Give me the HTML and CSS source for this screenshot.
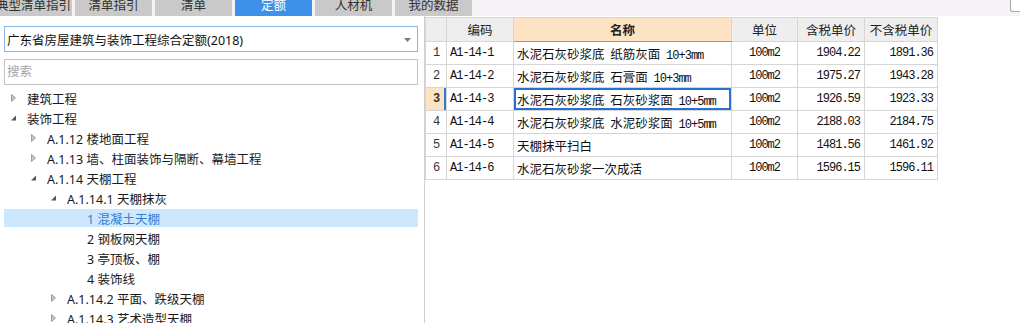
FILE: index.html
```html
<!DOCTYPE html>
<html lang="zh-CN">
<head>
  <meta charset="UTF-8">
  <title>定额</title>
  <link rel="stylesheet" href="styles.css">
</head>
<body>
  <!-- Top tabs -->
  <div class="topbar">
    <div class="tabs">
      <div class="tab">典型清单指引</div>
      <div class="tab">清单指引</div>
      <div class="tab">清单</div>
      <div class="tab active">定额</div>
      <div class="tab">人材机</div>
      <div class="tab">我的数据</div>
    </div>
    <div class="corner-box"></div>
  </div>

  <div class="main">
    <!-- Left: library + tree -->
    <div class="left">
      <div class="select">
        <span>广东省房屋建筑与装饰工程综合定额(2018)</span>
        <svg class="caret" width="7" height="4" viewBox="0 0 7 4"><polygon points="0,0 7,0 3.5,4" fill="#7a7a7a"/></svg>
      </div>
      <div class="search">搜索</div>

      <div class="tree">
        <div class="node lv0"><span class="arrow"><svg width="8" height="8" viewBox="0 0 8 8"><polygon class="closed" points="1.5,0.5 5.5,4 1.5,7.5"/></svg></span>建筑工程</div>
        <div class="node lv0"><span class="arrow"><svg width="8" height="8" viewBox="0 0 8 8"><polygon class="open" points="6,1.5 6,6.5 1,6.5"/></svg></span>装饰工程</div>
        <div class="node lv1"><span class="arrow"><svg width="8" height="8" viewBox="0 0 8 8"><polygon class="closed" points="1.5,0.5 5.5,4 1.5,7.5"/></svg></span>A.1.12 楼地面工程</div>
        <div class="node lv1"><span class="arrow"><svg width="8" height="8" viewBox="0 0 8 8"><polygon class="closed" points="1.5,0.5 5.5,4 1.5,7.5"/></svg></span>A.1.13 墙、柱面装饰与隔断、幕墙工程</div>
        <div class="node lv1"><span class="arrow"><svg width="8" height="8" viewBox="0 0 8 8"><polygon class="open" points="6,1.5 6,6.5 1,6.5"/></svg></span>A.1.14 天棚工程</div>
        <div class="node lv2"><span class="arrow"><svg width="8" height="8" viewBox="0 0 8 8"><polygon class="open" points="6,1.5 6,6.5 1,6.5"/></svg></span>A.1.14.1 天棚抹灰</div>
        <div class="node lv3 selected">1 混凝土天棚</div>
        <div class="node lv3">2 钢板网天棚</div>
        <div class="node lv3">3 亭顶板、棚</div>
        <div class="node lv3">4 装饰线</div>
        <div class="node lv2"><span class="arrow"><svg width="8" height="8" viewBox="0 0 8 8"><polygon class="closed" points="1.5,0.5 5.5,4 1.5,7.5"/></svg></span>A.1.14.2 平面、跌级天棚</div>
        <div class="node lv2"><span class="arrow"><svg width="8" height="8" viewBox="0 0 8 8"><polygon class="closed" points="1.5,0.5 5.5,4 1.5,7.5"/></svg></span>A.1.14.3 艺术造型天棚</div>
      </div>
    </div>

    <!-- Right: quota grid -->
    <div class="right">
      <table class="grid">
        <colgroup>
          <col class="c-no"><col class="c-code"><col class="c-name"><col class="c-unit"><col class="c-price"><col class="c-price2">
        </colgroup>
        <thead>
          <tr>
            <th></th>
            <th>编码</th>
            <th class="hl">名称</th>
            <th>单位</th>
            <th>含税单价</th>
            <th>不含税单价</th>
          </tr>
        </thead>
        <tbody>
          <tr>
            <td class="no">1</td><td class="code">A1-14-1</td>
            <td class="name">水泥石灰砂浆底 纸筋灰面 <span class="mono">10+3mm</span></td>
            <td class="unit">100m2</td><td class="num">1904.22</td><td class="num">1891.36</td>
          </tr>
          <tr>
            <td class="no">2</td><td class="code">A1-14-2</td>
            <td class="name">水泥石灰砂浆底 石膏面 <span class="mono">10+3mm</span></td>
            <td class="unit">100m2</td><td class="num">1975.27</td><td class="num">1943.28</td>
          </tr>
          <tr class="current">
            <td class="no">3</td><td class="code">A1-14-3</td>
            <td class="name focus">水泥石灰砂浆底 石灰砂浆面 <span class="mono">10+5mm</span></td>
            <td class="unit">100m2</td><td class="num">1926.59</td><td class="num">1923.33</td>
          </tr>
          <tr>
            <td class="no">4</td><td class="code">A1-14-4</td>
            <td class="name">水泥石灰砂浆底 水泥砂浆面 <span class="mono">10+5mm</span></td>
            <td class="unit">100m2</td><td class="num">2188.03</td><td class="num">2184.75</td>
          </tr>
          <tr>
            <td class="no">5</td><td class="code">A1-14-5</td>
            <td class="name">天棚抹平扫白</td>
            <td class="unit">100m2</td><td class="num">1481.56</td><td class="num">1461.92</td>
          </tr>
          <tr>
            <td class="no">6</td><td class="code">A1-14-6</td>
            <td class="name">水泥石灰砂浆一次成活</td>
            <td class="unit">100m2</td><td class="num">1596.15</td><td class="num">1596.11</td>
          </tr>
        </tbody>
      </table>
    </div>
  </div>
</body>
</html>
```

FILE: styles.css
```css
/* ===== Base ===== */
* {
  margin: 0;
  padding: 0;
  box-sizing: border-box;
}
html, body {
  height: 100%;
  overflow: hidden;
}
body {
  background: #fff;
  color: #1a1a1a;
  font-family: "Noto Sans", "Noto Sans CJK SC", sans-serif;
  font-size: 12.5px;
}

/* ===== Top tabs ===== */
.topbar {
  height: 16px;
  background: #f4f2f4;
  display: flex;
  justify-content: space-between;
  overflow: hidden;
}
.tabs {
  display: flex;
  gap: 3px;
  margin-left: -5px;
  margin-top: -7px;
}
.tab {
  width: 77px;
  height: 23px;
  line-height: 23px;
  text-align: center;
  background: #c9c9c9;
  color: #333;
  font-family: "Noto Sans CJK SC", sans-serif;
  white-space: nowrap;
}
.tab.active {
  background: #3d91eb;
  color: #fff;
}
.corner-box {
  width: 10px;
  height: 12px;
  background: #fff;
  border: 1px solid #a8a8a8;
  border-top: none;
  border-right: none;
  border-bottom-left-radius: 3px;
}

/* ===== Layout ===== */
.main {
  display: flex;
  height: calc(100% - 16px);
}
.left {
  width: 425px;
  border-right: 1px solid #cfcfcf;
  padding: 10px 6px 0 4px;
}
.right {
  flex: 1;
  padding-top: 1px;
}

/* ===== Library select + search ===== */
.select {
  height: 26px;
  border: 1px solid #86b5e6;
  display: flex;
  align-items: center;
  justify-content: space-between;
  padding: 0 6px 0 2px;
  color: #111;
  white-space: nowrap;
}
.select .caret {
  margin-top: 1px;
}
.search {
  height: 26px;
  margin-top: 7px;
  border: 1px solid #c3c3c3;
  padding-left: 2px;
  line-height: 24px;
  color: #a3a3a3;
}

/* ===== Tree ===== */
.tree {
  margin-top: 3px;
}
.node {
  height: 20px;
  display: flex;
  align-items: center;
  white-space: nowrap;
}
.node .arrow {
  width: 17px;
  display: flex;
  align-items: center;
}
.node .closed {
  fill: #c4c4c4;
  stroke: #8c8c8c;
  stroke-width: 0.8;
}
.node .open {
  fill: #555;
}
.lv0 { padding-left: 6px; }
.lv1 { padding-left: 26px; }
.lv2 { padding-left: 46px; }
.lv3 { padding-left: 83px; }
.node.selected {
  background: #cce8ff;
  color: #3a7bcc;
  height: 18px;
  margin: 1px 0;
}

/* ===== Grid ===== */
.grid {
  border-collapse: collapse;
  table-layout: fixed;
  width: 512px;
  font-family: "Noto Sans CJK SC", sans-serif;
  font-size: 12.5px;
}
.c-no { width: 21px; }
.c-code { width: 67px; }
.c-name { width: 218px; }
.c-unit { width: 66px; }
.c-price { width: 67px; }
.c-price2 { width: 73px; }
.grid th,
.grid td {
  border: 1px solid #d6d6d6;
  white-space: nowrap;
  overflow: hidden;
}
.grid th {
  height: 24px;
  background: #eeeeee;
  font-weight: normal;
  color: #222;
}
.grid th.hl {
  background: #fde3c3;
  font-weight: bold;
  border-bottom: 1px solid #6aa2e4;
}
.grid td {
  height: 23px;
  padding: 0 3px;
  color: #111;
}
.grid td.name {
  word-spacing: 3px;
}
.grid td.no,
.grid td.code,
.grid td.unit,
.grid td.num,
.grid .mono {
  font-family: "Liberation Mono", monospace;
  font-size: 12px;
  letter-spacing: -1px;
  word-spacing: 0;
}
.grid td.no {
  text-align: center;
  padding: 0;
  color: #333;
}
.grid td.unit {
  text-align: center;
}
.grid td.num {
  text-align: right;
  padding-right: 4px;
}
.grid tr.current td.no {
  background: #fde3c3;
  font-weight: bold;
  box-shadow: inset -2px 0 0 #2e7ad8;
}
.grid td.focus {
  box-shadow: inset 0 0 0 2px #2a6fd2;
}
```
